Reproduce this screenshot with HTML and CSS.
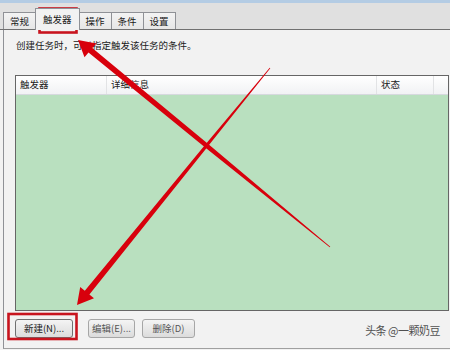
FILE: index.html
```html
<!DOCTYPE html>
<html lang="zh-CN">
<head>
    <meta charset="UTF-8">
    <title>触发器</title>
    <link rel="stylesheet" href="styles.css">
</head>
<body>
    <div class="window">
        <div class="titlebar"></div>
        <div class="tabbar">
            <div class="tab">常规</div>
            <div class="tab active">触发器</div>
            <div class="tab">操作</div>
            <div class="tab">条件</div>
            <div class="tab">设置</div>
        </div>
        <div class="panel">
            <div class="desc">创建任务时，可以指定触发该任务的条件。</div>
            <div class="list">
                <div class="list-head">
                    <div class="col col-trigger">触发器</div>
                    <div class="col col-detail">详细信息</div>
                    <div class="col col-state">状态</div>
                    <div class="col col-fill"></div>
                </div>
                <div class="list-body"></div>
            </div>
            <div class="actions">
                <button class="btn btn-new">新建(N)...</button>
                <button class="btn btn-edit" disabled>编辑(E)...</button>
                <button class="btn btn-del" disabled>删除(D)</button>
                <div class="watermark">头条 @一颗奶豆</div>
            </div>
        </div>

        <!-- red marks drawn over the screenshot -->
        <svg class="marks" width="450" height="350" viewBox="0 0 450 350">
            <rect x="39.5" y="8.5" width="37" height="24" fill="none" stroke="#c8141e" stroke-width="2.6"/>
            <rect x="8.5" y="314" width="68" height="25" fill="none" stroke="#c8141e" stroke-width="2.6"/>
            <polygon fill="#d8000c" points="78,40 96.5,43.5 92.3,47.9 208.5,144.2 330.3,246.7 329.7,247.3 205.5,147.8 88.5,52.5 84.5,57.2"/>
            <polygon fill="#d8000c" points="77,305 80.2,287 84.8,290.7 205.8,144 269.7,67.8 270.3,68.3 208.2,146 89.4,294.5 94,298.3"/>
        </svg>
    </div>
</body>
</html>
```

FILE: styles.css
```css
body {
    margin: 0;
    background-color: #f2f2f2;
    font-family: "Noto Sans CJK SC", "Noto Sans", sans-serif;
    font-size: 9.5px;
    color: #1a1a1a;
}
.window {
    position: relative;
    width: 450px;
    height: 350px;
    display: flex;
    flex-direction: column;
    overflow: hidden;
}
.titlebar {
    height: 3px;
    background-color: #b4cce4;
}
.tabbar {
    height: 26px;
    background-color: #e0e0e0;
    border-bottom: 1px solid #707070;
    display: flex;
    align-items: flex-end;
    padding-left: 3px;
}
.tab {
    height: 17px;
    line-height: 16px;
    padding: 0 6px;
    border: 1px solid #8f9196;
    border-bottom: none;
    margin-right: -1px;
    background: linear-gradient(#f3f3f3, #e6e6e6);
    box-sizing: border-box;
}
.tab.active {
    height: 22px;
    line-height: 20px;
    margin-bottom: -1px;
    background: #f2f2f2;
    position: relative;
    z-index: 1;
    padding: 0 7px;
}
.panel {
    flex: 1;
    margin-left: 3px;
    border-left: 1px solid #8f9196;
    border-bottom: 1px solid #a0a0a0;
    margin-bottom: 1px;
    padding: 8px 0 0 11px;
}
.desc {
    height: 14px;
    line-height: 14px;
    padding-left: 1px;
}
.list {
    margin-top: 23px;
    width: 434px;
    height: 236px;
    border: 1px solid #666;
    box-sizing: border-box;
    display: flex;
    flex-direction: column;
}
.list-head {
    height: 18px;
    display: flex;
    background: linear-gradient(#ffffff, #f1f2f4);
    border-bottom: 1px solid #d6d9de;
}
.col {
    line-height: 17px;
    padding-left: 4px;
    border-right: 1px solid #e2e3e5;
    box-sizing: border-box;
}
.col-trigger {
    width: 91px;
}
.col-detail {
    width: 270px;
}
.col-state {
    width: 57px;
}
.col-fill {
    flex: 1;
    border-right: none;
}
.list-body {
    flex: 1;
    background-color: #b9e0bf;
}
.actions {
    margin-top: 7px;
    display: flex;
    align-items: center;
}
.btn {
    height: 19px;
    padding: 0;
    font-family: inherit;
    font-size: 9.5px;
    color: #1a1a1a;
    border: 1px solid #707070;
    border-radius: 3px;
    background: linear-gradient(#f4f4f4, #dcdcdc);
    box-sizing: border-box;
}
.btn-new {
    width: 58px;
}
.btn-edit {
    width: 47px;
    margin-left: 15px;
    color: #555;
    border-color: #a6a6a6;
}
.btn-del {
    width: 53px;
    margin-left: 7px;
    color: #555;
    border-color: #a6a6a6;
}
.watermark {
    margin-left: auto;
    margin-right: 10px;
    margin-top: 4px;
    font-size: 11px;
    letter-spacing: -0.5px;
    color: #505050;
}
.marks {
    position: absolute;
    left: 0;
    top: 0;
    pointer-events: none;
}
```
